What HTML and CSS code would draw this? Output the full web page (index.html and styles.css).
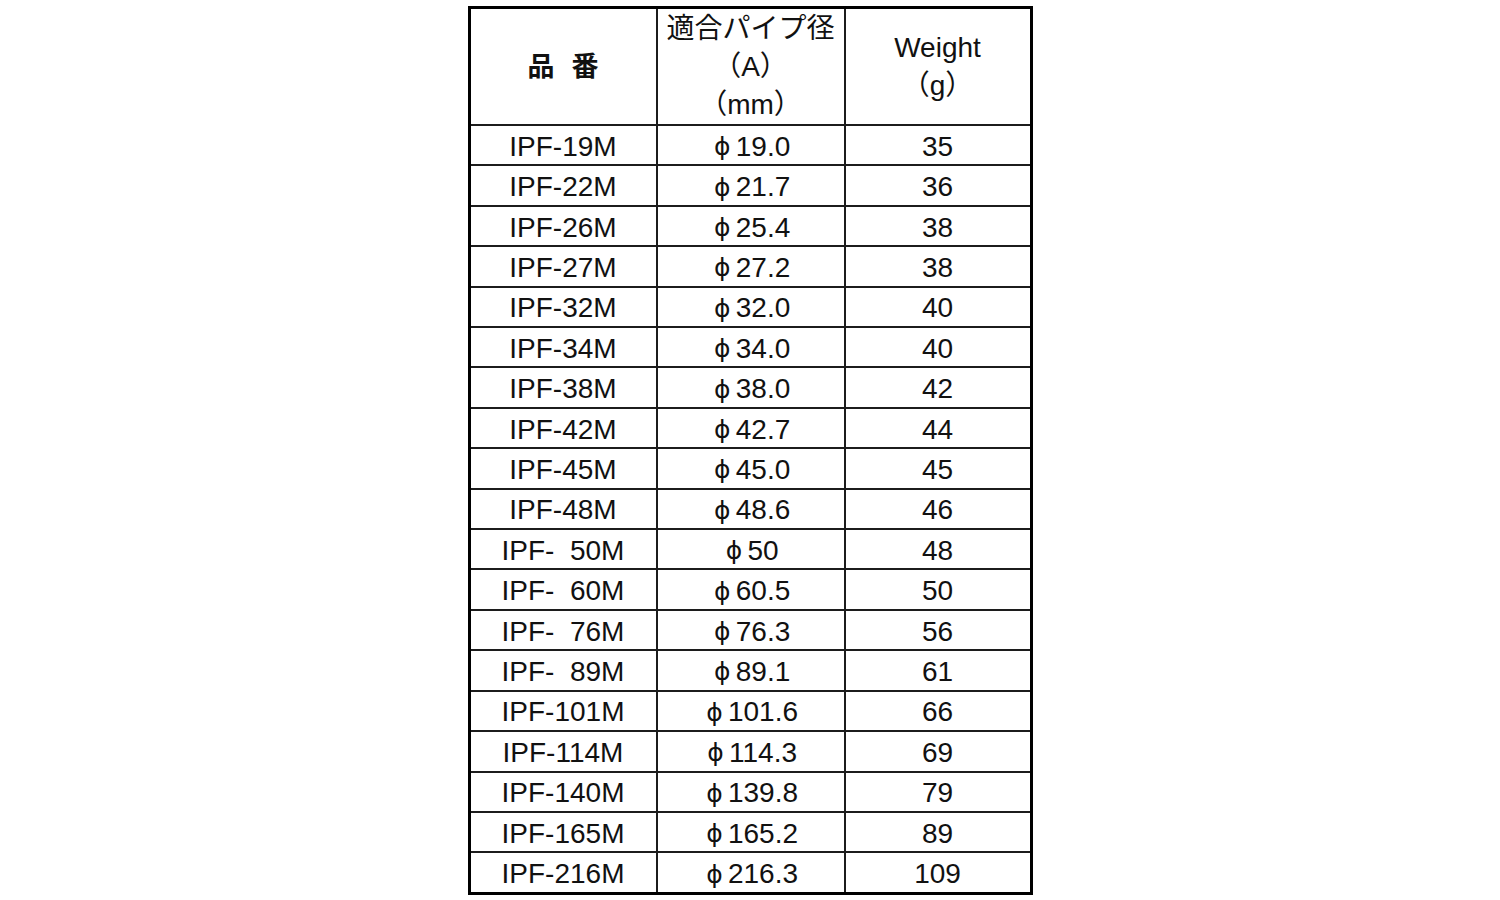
FILE: index.html
```html
<!DOCTYPE html>
<html lang="ja">
<head>
<meta charset="utf-8">
<title>IPF</title>
<link rel="stylesheet" href="styles.css">
</head>
<body>
<div class="sheet">
  <div class="cell head"><span class="hin">品</span><span class="ban">番</span></div>
  <div class="cell head"><div>適合パイプ径</div><div>（A）</div><div>（mm）</div></div>
  <div class="cell head"><div>Weight</div><div>（g）</div></div>

  <div class="cell">IPF-19M</div><div class="cell"><span class="phi">ϕ</span>19.0</div><div class="cell">35</div>
  <div class="cell">IPF-22M</div><div class="cell"><span class="phi">ϕ</span>21.7</div><div class="cell">36</div>
  <div class="cell">IPF-26M</div><div class="cell"><span class="phi">ϕ</span>25.4</div><div class="cell">38</div>
  <div class="cell">IPF-27M</div><div class="cell"><span class="phi">ϕ</span>27.2</div><div class="cell">38</div>
  <div class="cell">IPF-32M</div><div class="cell"><span class="phi">ϕ</span>32.0</div><div class="cell">40</div>
  <div class="cell">IPF-34M</div><div class="cell"><span class="phi">ϕ</span>34.0</div><div class="cell">40</div>
  <div class="cell">IPF-38M</div><div class="cell"><span class="phi">ϕ</span>38.0</div><div class="cell">42</div>
  <div class="cell">IPF-42M</div><div class="cell"><span class="phi">ϕ</span>42.7</div><div class="cell">44</div>
  <div class="cell">IPF-45M</div><div class="cell"><span class="phi">ϕ</span>45.0</div><div class="cell">45</div>
  <div class="cell">IPF-48M</div><div class="cell"><span class="phi">ϕ</span>48.6</div><div class="cell">46</div>
  <div class="cell">IPF-  50M</div><div class="cell"><span class="phi">ϕ</span>50</div><div class="cell">48</div>
  <div class="cell">IPF-  60M</div><div class="cell"><span class="phi">ϕ</span>60.5</div><div class="cell">50</div>
  <div class="cell">IPF-  76M</div><div class="cell"><span class="phi">ϕ</span>76.3</div><div class="cell">56</div>
  <div class="cell">IPF-  89M</div><div class="cell"><span class="phi">ϕ</span>89.1</div><div class="cell">61</div>
  <div class="cell">IPF-101M</div><div class="cell"><span class="phi">ϕ</span>101.6</div><div class="cell">66</div>
  <div class="cell">IPF-114M</div><div class="cell"><span class="phi">ϕ</span>114.3</div><div class="cell">69</div>
  <div class="cell">IPF-140M</div><div class="cell"><span class="phi">ϕ</span>139.8</div><div class="cell">79</div>
  <div class="cell">IPF-165M</div><div class="cell"><span class="phi">ϕ</span>165.2</div><div class="cell">89</div>
  <div class="cell">IPF-216M</div><div class="cell"><span class="phi">ϕ</span>216.3</div><div class="cell">109</div>
</div>
</body>
</html>
```
FILE: styles.css
```css
html, body {
  margin: 0;
  padding: 0;
  background: #fff;
}
body {
  font-family: "Liberation Sans", "Noto Sans CJK JP", sans-serif;
  color: #111;
}
.sheet {
  width: 559px;
  margin: 6px auto 0;
  border: 3px solid #000;
  background: #1c1c1c;
  display: grid;
  grid-template-columns: 185px 186px 184px;
  grid-template-rows: 115px;
  grid-auto-rows: 38.42px;
  gap: 2px;
}
.cell {
  background: #fff;
  display: flex;
  align-items: center;
  justify-content: center;
  font-size: 28px;
  white-space: pre;
  line-height: 1;
  padding-top: 3px;
}
.head {
  flex-direction: column;
  line-height: 38px;
  padding-top: 1px;
}
.head:first-child {
  flex-direction: row;
  font-weight: bold;
  font-size: 27px;
}
.hin {
  margin-right: 17px;
}
.phi {
  display: inline-block;
  width: 27px;
  margin-left: -2px;
  text-align: center;
  font-family: "DejaVu Sans", sans-serif;
  font-size: 25px;
}
```
